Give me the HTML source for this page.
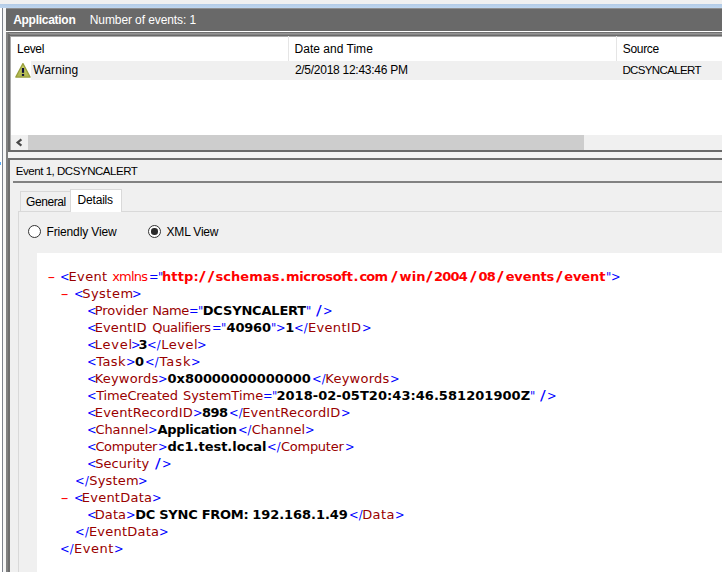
<!DOCTYPE html>
<html lang="en">
<head>
<meta charset="utf-8">
<title>Event Viewer - Application</title>
<style>
html,body{margin:0;padding:0;}
body{width:722px;height:572px;overflow:hidden;background:#fff;position:relative;
  font-family:"Liberation Sans","DejaVu Sans",sans-serif;font-size:12px;color:#000;}
.abs{position:absolute;}
.t{position:absolute;white-space:nowrap;line-height:16px;height:16px;}
#topgray{left:0;top:0;width:722px;height:4px;background:#f0f0f0;}
#topblue{left:0;top:4px;width:722px;height:4px;background:linear-gradient(#b3cbe6,#bfd6ef);}
#leftline{left:2px;top:8px;width:1px;height:564px;background:#7e838c;}
#leftgap{left:3px;top:8px;width:3px;height:564px;background:#f6f6f6;}
#hdr{left:6px;top:8px;width:716px;height:23px;background:#696969;}
#hdrtop{left:6px;top:8px;width:716px;height:1px;background:#8e8e8e;}
#list{left:6px;top:32px;width:716px;height:120px;background:#808080;}
#list .in1{left:2px;top:2px;right:0;bottom:0;background:#696969;}
#list .in2{left:4px;top:4px;right:0;bottom:2px;background:#fff;border-left:1px solid #a9a9a9;border-top:1px solid #a9a9a9;}
.colsep{width:1px;top:36px;height:25px;background:#e5e5e5;}
#row{left:31px;top:61px;width:691px;height:19px;background:#f0f0f0;}
#sb{left:11px;top:135px;width:711px;height:15px;background:#f0f0f0;}
#thumb{left:28px;top:135px;width:556px;height:15px;background:#cdcdcd;}
#gap{left:6px;top:152px;width:714px;height:6px;background:#f3f3f3;border-left:2px solid #808080;}
#pane{left:6px;top:158px;width:716px;height:414px;background:#808080;}
#pane .in1{left:2px;top:0;right:0;bottom:0;background:#6e6e6e;}
#pane .in2{left:3.5px;top:2px;right:0;bottom:0;background:#f0f0f0;}
#titleline{left:13px;top:181px;width:709px;height:2px;background:#828282;}
#tabpage{left:18px;top:211px;width:710px;height:370px;border:1px solid #d9d9d9;background:#f0f0f0;box-sizing:border-box;}
#tabgen{left:20px;top:191px;width:51px;height:20px;border:1px solid #d9d9d9;border-bottom:none;background:#f0f0f0;box-sizing:border-box;}
#tabdet{left:70px;top:189px;width:52px;height:23px;border:1px solid #d9d9d9;border-bottom:none;background:#fff;box-sizing:border-box;}
.radio{width:13px;height:13px;border-radius:50%;border:1px solid #333;background:#fff;box-sizing:border-box;}
.radio i{position:absolute;left:2.3px;top:2.3px;width:6.4px;height:6.4px;border-radius:50%;background:#2b2b2b;}
#xml{left:37px;top:253px;width:685px;height:319px;background:#fff;}
.x{position:absolute;white-space:pre;font-family:"DejaVu Sans","Liberation Sans",sans-serif;font-size:13px;line-height:17px;height:17px;}
.x.m{color:#00f;transform:scaleX(.88);transform-origin:0 0;}
.x.msl{color:#00f;transform:scale(1.3,1.1);transform-origin:0 13px;}
.x.tg{color:#900;}
.x.ns{color:#f00;}
.x.b{color:#000;font-weight:bold;}
.x.bns{color:#f00;font-weight:bold;}
.x.bsl{color:#f00;font-weight:bold;transform:scale(1.4,1.14);transform-origin:0 13px;}
.x.dash{color:#f00;transform-origin:0 0;margin-top:1px;font-family:"Liberation Mono","DejaVu Sans Mono",monospace;font-size:13.33px;}
</style>
</head>
<body>
<div class="abs" id="topgray"></div>
<div class="abs" id="topblue"></div>
<div class="abs" id="leftline"></div>
<div class="abs" id="leftgap"></div>
<div class="abs" style="left:0;top:162px;width:1px;height:3px;background:#58aaf6"></div>

<div class="abs" id="hdr"><div class="abs" style="left:0;top:0;width:716px;height:1px;background:#8e8e8e"></div>
</div>

<div class="abs" id="list"><div class="abs in1"></div><div class="abs in2"></div><div class="abs" style="left:2px;top:0;right:0;height:1px;background:#707070"></div><div class="abs" style="left:3px;top:1px;right:0;height:1px;background:#959595"></div><div class="abs" style="left:4px;top:2px;right:0;height:1px;background:#858585"></div></div>
<div class="abs colsep" style="left:288px"></div>
<div class="abs colsep" style="left:616px"></div>
<div class="abs" id="row"></div>
<svg class="abs" id="warn" style="left:15px;top:62px" width="16" height="16" viewBox="0 0 16 16">
  <defs><linearGradient id="wg" x1="0" y1="0" x2="0" y2="1"><stop offset="0" stop-color="#ced470"/><stop offset="1" stop-color="#aeb54b"/></linearGradient></defs>
  <path d="M7.95 1.6 L15.1 15.1 L0.8 15.1 Z" fill="url(#wg)" stroke="#999f3e" stroke-width="1.3" stroke-linejoin="round"/>
  <rect x="6.9" y="6" width="2.2" height="4.8" fill="#0c0c3c"/>
  <rect x="6.9" y="12" width="2.2" height="1.9" fill="#0c0c3c"/>
</svg>
<div class="abs" id="sb"></div>
<div class="abs" id="thumb"></div>
<svg class="abs" style="left:15px;top:138px" width="9" height="9" viewBox="0 0 9 9"><path d="M6.4 1.3 L2.6 4.5 L6.4 7.7" fill="none" stroke="#484848" stroke-width="2.2"/></svg>
<div class="abs" id="gap"></div>

<div class="abs" id="pane"><div class="abs in1"></div><div class="abs in2"></div></div>
<div class="abs" id="titleline"></div>
<div class="abs" id="tabpage"></div>
<div class="abs" id="tabgen"></div>
<div class="abs" id="tabdet"></div>
<div class="abs radio" style="left:28px;top:225px"></div>
<div class="abs radio" style="left:148px;top:225px"><i></i></div>

<div class="abs" id="xml"></div>
<div id="labels">
<span class="t" id="t_app" style="left:13.15px;top:11.84px;letter-spacing:-0.275px;font-weight:bold;color:#fff;">Application</span>
<span class="t" id="t_num" style="left:89.75px;top:11.84px;letter-spacing:-0.096px;color:#fff;">Number of events: 1</span>
<span class="t" id="t_level" style="left:17.05px;top:40.84px;letter-spacing:-0.343px;">Level</span>
<span class="t" id="t_date" style="left:294.55px;top:40.84px;letter-spacing:0.018px;">Date and Time</span>
<span class="t" id="t_source" style="left:622.80px;top:40.84px;letter-spacing:-0.320px;">Source</span>
<span class="t" id="t_warning" style="left:33.35px;top:61.84px;letter-spacing:0.089px;">Warning</span>
<span class="t" id="t_dt" style="left:294.90px;top:61.84px;letter-spacing:-0.265px;">2/5/2018 12:43:46 PM</span>
<span class="t" id="t_src" style="left:622.40px;top:62.02px;letter-spacing:-0.629px;font-size:11.5px;">DCSYNCALERT</span>
<span class="t" id="t_ev" style="left:15.80px;top:163.02px;letter-spacing:-0.462px;font-size:11.5px;">Event 1, DCSYNCALERT</span>
<span class="t" id="t_gen" style="left:26.10px;top:193.84px;letter-spacing:-0.454px;">General</span>
<span class="t" id="t_det" style="left:77.55px;top:191.84px;letter-spacing:-0.188px;">Details</span>
<span class="t" id="t_fv" style="left:46.45px;top:223.84px;letter-spacing:-0.133px;">Friendly View</span>
<span class="t" id="t_xv" style="left:166.55px;top:223.84px;letter-spacing:-0.198px;">XML View</span>
</div>
<div id="xmltext">
<span class="x dash" style="left:44.67px;top:268px;transform:scaleX(1.600);">-</span>
<span class="x m" style="left:60.43px;top:268px;">&lt;</span>
<span class="x tg" style="left:68.48px;top:268px;letter-spacing:0.375px;">Event</span>
<span class="x ns" style="left:112.20px;top:268px;letter-spacing:-0.775px;">xmlns</span>
<span class="x m" style="left:148.83px;top:268px;">=</span>
<span class="x m" style="left:158.13px;top:268px;">"</span>
<span class="x bns" style="left:161.88px;top:268px;letter-spacing:0.142px;">http:</span>
<span class="x bsl" style="left:199.10px;top:268px;letter-spacing:1.591px;">//</span>
<span class="x bns" style="left:215.39px;top:268px;letter-spacing:0.094px;">schemas</span>
<span class="x bns" style="left:280.18px;top:268px;">.</span>
<span class="x bns" style="left:285.98px;top:268px;letter-spacing:-0.332px;">microsoft</span>
<span class="x bns" style="left:353.58px;top:268px;">.</span>
<span class="x bns" style="left:359.39px;top:268px;letter-spacing:-0.712px;">com</span>
<span class="x bsl" style="left:390.50px;top:268px;">/</span>
<span class="x bns" style="left:399.49px;top:268px;letter-spacing:0.206px;">win</span>
<span class="x bsl" style="left:426.30px;top:268px;">/</span>
<span class="x bns" style="left:433.98px;top:268px;letter-spacing:-0.751px;">2004</span>
<span class="x bsl" style="left:469.90px;top:268px;">/</span>
<span class="x bns" style="left:478.39px;top:268px;letter-spacing:-0.564px;">08</span>
<span class="x bsl" style="left:497.30px;top:268px;">/</span>
<span class="x bns" style="left:505.69px;top:268px;letter-spacing:-0.137px;">events</span>
<span class="x bsl" style="left:555.90px;top:268px;">/</span>
<span class="x bns" style="left:564.19px;top:268px;letter-spacing:-0.063px;">event</span>
<span class="x m" style="left:605.63px;top:268px;">"</span>
<span class="x m" style="left:611.13px;top:268px;">&gt;</span>
<span class="x dash" style="left:57.86px;top:285px;transform:scaleX(1.654);">-</span>
<span class="x m" style="left:73.63px;top:285px;">&lt;</span>
<span class="x tg" style="left:82.19px;top:285px;letter-spacing:0.484px;">System</span>
<span class="x m" style="left:131.83px;top:285px;">&gt;</span>
<span class="x m" style="left:86.93px;top:302px;">&lt;</span>
<span class="x tg" style="left:94.78px;top:302px;letter-spacing:-0.063px;">Provider</span>
<span class="x tg" style="left:152.28px;top:302px;letter-spacing:-0.483px;">Name</span>
<span class="x m" style="left:189.43px;top:302px;">=</span>
<span class="x m" style="left:198.13px;top:302px;">"</span>
<span class="x b" style="left:202.78px;top:302px;letter-spacing:-0.184px;">DCSYNCALERT</span>
<span class="x m" style="left:306.33px;top:302px;">"</span>
<span class="x msl" style="left:316.00px;top:302px;">/</span>
<span class="x m" style="left:323.13px;top:302px;">&gt;</span>
<span class="x m" style="left:86.93px;top:319px;">&lt;</span>
<span class="x tg" style="left:94.78px;top:319px;letter-spacing:0.100px;">EventID</span>
<span class="x tg" style="left:152.29px;top:319px;letter-spacing:-0.353px;">Qualifiers</span>
<span class="x m" style="left:211.93px;top:319px;">=</span>
<span class="x m" style="left:220.93px;top:319px;">"</span>
<span class="x b" style="left:226.59px;top:319px;letter-spacing:-0.202px;">40960</span>
<span class="x m" style="left:270.73px;top:319px;">"</span>
<span class="x m" style="left:276.33px;top:319px;">&gt;</span>
<span class="x b" style="left:285.18px;top:319px;">1</span>
<span class="x m" style="left:294.23px;top:319px;letter-spacing:0.062px;">&lt;/</span>
<span class="x tg" style="left:307.88px;top:319px;letter-spacing:0.350px;">EventID</span>
<span class="x m" style="left:361.63px;top:319px;">&gt;</span>
<span class="x m" style="left:86.93px;top:336px;">&lt;</span>
<span class="x tg" style="left:94.78px;top:336px;letter-spacing:0.769px;">Level</span>
<span class="x m" style="left:130.93px;top:336px;">&gt;</span>
<span class="x b" style="left:138.49px;top:336px;">3</span>
<span class="x m" style="left:147.43px;top:336px;letter-spacing:0.062px;">&lt;/</span>
<span class="x tg" style="left:161.28px;top:336px;letter-spacing:0.519px;">Level</span>
<span class="x m" style="left:196.93px;top:336px;">&gt;</span>
<span class="x m" style="left:86.93px;top:353px;">&lt;</span>
<span class="x tg" style="left:96.20px;top:353px;letter-spacing:0.418px;">Task</span>
<span class="x m" style="left:125.73px;top:353px;">&gt;</span>
<span class="x b" style="left:135.09px;top:353px;">0</span>
<span class="x m" style="left:144.73px;top:353px;letter-spacing:0.062px;">&lt;/</span>
<span class="x tg" style="left:159.40px;top:353px;letter-spacing:1.018px;">Task</span>
<span class="x m" style="left:190.93px;top:353px;">&gt;</span>
<span class="x m" style="left:86.93px;top:370px;">&lt;</span>
<span class="x tg" style="left:94.78px;top:370px;letter-spacing:0.171px;">Keywords</span>
<span class="x m" style="left:158.23px;top:370px;">&gt;</span>
<span class="x b" style="left:167.59px;top:370px;letter-spacing:-0.056px;">0x80000000000000</span>
<span class="x m" style="left:311.73px;top:370px;letter-spacing:0.062px;">&lt;/</span>
<span class="x tg" style="left:325.28px;top:370px;letter-spacing:0.243px;">Keywords</span>
<span class="x m" style="left:389.73px;top:370px;">&gt;</span>
<span class="x m" style="left:86.93px;top:387px;">&lt;</span>
<span class="x tg" style="left:96.20px;top:387px;letter-spacing:-0.152px;">TimeCreated</span>
<span class="x tg" style="left:182.89px;top:387px;">SystemTime</span>
<span class="x m" style="left:263.43px;top:387px;">=</span>
<span class="x m" style="left:271.93px;top:387px;">"</span>
<span class="x b" style="left:276.38px;top:387px;letter-spacing:0.043px;">2018-02-05T20:43:46.581201900Z</span>
<span class="x m" style="left:529.83px;top:387px;">"</span>
<span class="x msl" style="left:540.10px;top:387px;">/</span>
<span class="x m" style="left:547.13px;top:387px;">&gt;</span>
<span class="x m" style="left:86.93px;top:404px;">&lt;</span>
<span class="x tg" style="left:94.78px;top:404px;letter-spacing:0.157px;">EventRecordID</span>
<span class="x m" style="left:192.63px;top:404px;">&gt;</span>
<span class="x b" style="left:201.89px;top:404px;letter-spacing:-0.505px;">898</span>
<span class="x m" style="left:228.93px;top:404px;letter-spacing:0.062px;">&lt;/</span>
<span class="x tg" style="left:242.18px;top:404px;letter-spacing:0.182px;">EventRecordID</span>
<span class="x m" style="left:340.93px;top:404px;">&gt;</span>
<span class="x m" style="left:86.93px;top:421px;">&lt;</span>
<span class="x tg" style="left:95.39px;top:421px;letter-spacing:-0.048px;">Channel</span>
<span class="x m" style="left:147.83px;top:421px;">&gt;</span>
<span class="x b" style="left:157.50px;top:421px;letter-spacing:-0.329px;">Application</span>
<span class="x m" style="left:237.53px;top:421px;letter-spacing:-0.052px;">&lt;/</span>
<span class="x tg" style="left:251.79px;top:421px;">Channel</span>
<span class="x m" style="left:304.93px;top:421px;">&gt;</span>
<span class="x m" style="left:86.93px;top:438px;">&lt;</span>
<span class="x tg" style="left:95.39px;top:438px;letter-spacing:-0.365px;">Computer</span>
<span class="x m" style="left:158.03px;top:438px;">&gt;</span>
<span class="x b" style="left:167.59px;top:438px;letter-spacing:-0.025px;">dc1.test.local</span>
<span class="x m" style="left:266.73px;top:438px;letter-spacing:0.062px;">&lt;/</span>
<span class="x tg" style="left:280.99px;top:438px;letter-spacing:-0.265px;">Computer</span>
<span class="x m" style="left:344.83px;top:438px;">&gt;</span>
<span class="x m" style="left:86.93px;top:455px;">&lt;</span>
<span class="x tg" style="left:95.19px;top:455px;letter-spacing:0.073px;">Security</span>
<span class="x msl" style="left:154.90px;top:455px;">/</span>
<span class="x m" style="left:162.13px;top:455px;">&gt;</span>
<span class="x m" style="left:74.63px;top:472px;letter-spacing:0.403px;">&lt;/</span>
<span class="x tg" style="left:89.29px;top:472px;letter-spacing:0.164px;">System</span>
<span class="x m" style="left:138.43px;top:472px;">&gt;</span>
<span class="x dash" style="left:57.86px;top:489px;transform:scaleX(1.654);">-</span>
<span class="x m" style="left:73.63px;top:489px;">&lt;</span>
<span class="x tg" style="left:81.78px;top:489px;letter-spacing:0.237px;">EventData</span>
<span class="x m" style="left:151.73px;top:489px;">&gt;</span>
<span class="x m" style="left:86.93px;top:506px;">&lt;</span>
<span class="x tg" style="left:94.78px;top:506px;letter-spacing:0.080px;">Data</span>
<span class="x m" style="left:126.23px;top:506px;">&gt;</span>
<span class="x b" style="left:135.18px;top:506px;letter-spacing:-0.259px;">DC SYNC FROM:</span>
<span class="x b" style="left:252.28px;top:506px;letter-spacing:-0.062px;">192.168.1.49</span>
<span class="x m" style="left:348.53px;top:506px;letter-spacing:0.062px;">&lt;/</span>
<span class="x tg" style="left:362.18px;top:506px;letter-spacing:0.380px;">Data</span>
<span class="x m" style="left:394.73px;top:506px;">&gt;</span>
<span class="x m" style="left:74.63px;top:523px;letter-spacing:0.403px;">&lt;/</span>
<span class="x tg" style="left:88.88px;top:523px;letter-spacing:0.225px;">EventData</span>
<span class="x m" style="left:158.83px;top:523px;">&gt;</span>
<span class="x m" style="left:60.43px;top:540px;letter-spacing:0.062px;">&lt;/</span>
<span class="x tg" style="left:73.98px;top:540px;letter-spacing:0.525px;">Event</span>
<span class="x m" style="left:114.03px;top:540px;">&gt;</span>
</div>
</body>
</html>
